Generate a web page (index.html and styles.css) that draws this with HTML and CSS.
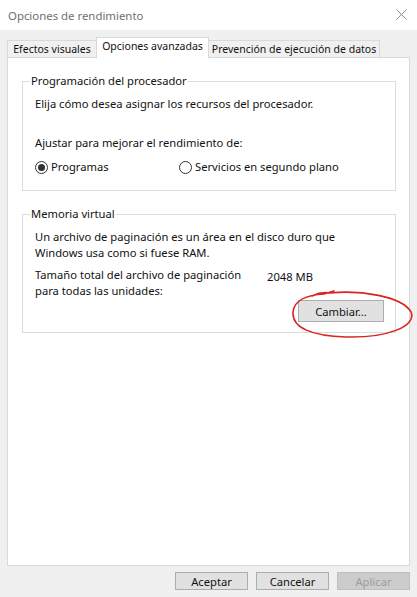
FILE: index.html
```html
<!DOCTYPE html>
<html lang="es">
<head>
<meta charset="utf-8">
<title>Opciones de rendimiento</title>
<link rel="stylesheet" href="styles.css">
</head>
<body>
<div class="window">
  <div class="titlebar">
    <span class="title">Opciones de rendimiento</span>
    <svg class="close" width="11" height="11" viewBox="0 0 11 11"><path d="M0.5 0.5 L10.5 10.5 M10.5 0.5 L0.5 10.5" stroke="#8a8a8a" stroke-width="1" fill="none"/></svg>
  </div>
  <div class="main">
    <div class="tabs">
      <div class="tab t1">Efectos visuales</div>
      <div class="tab active t2">Opciones avanzadas</div>
      <div class="tab t3">Prevención de ejecución de datos</div>
    </div>
    <div class="panel">
      <fieldset class="group g1">
        <legend>Programación del procesador</legend>
        <p class="line">Elija cómo desea asignar los recursos del procesador.</p>
        <p class="line l-ajustar">Ajustar para mejorar el rendimiento de:</p>
        <div class="radios">
          <div class="radio r1"><span class="circle checked"></span><span>Programas</span></div>
          <div class="radio r2"><span class="circle"></span><span>Servicios en segundo plano</span></div>
        </div>
      </fieldset>
      <fieldset class="group g2">
        <legend>Memoria virtual</legend>
        <p class="line">Un archivo de paginación es un área en el disco duro que<br>Windows usa como si fuese RAM.</p>
        <div class="size-row">
          <p class="line size-label">Tamaño total del archivo de paginación<br>para todas las unidades:</p>
          <span class="mb">2048 MB</span>
        </div>
        <div class="btn-row">
          <div class="btn-wrap">
            <div class="btn cambiar">Cambiar...</div>
            <svg class="scribble" width="128" height="52" viewBox="0 0 128 52">
              <path d="M22 6 C28 3 34 2 40 3 C70 0 112 6 121 22 C127 36 98 48 56 47 C22 46 2 38 3 22 C4 11 16 5 34 4 L44 1" fill="none" stroke="#d9251f" stroke-width="1.6" stroke-linecap="round" stroke-linejoin="round"/>
            </svg>
          </div>
        </div>
      </fieldset>
    </div>
    <div class="footer">
      <div class="btn">Aceptar</div>
      <div class="btn">Cancelar</div>
      <div class="btn disabled">Aplicar</div>
    </div>
  </div>
</div>
</body>
</html>
```
FILE: styles.css
```css
html, body {
  margin: 0;
  padding: 0;
}
body {
  width: 417px;
  height: 597px;
  overflow: hidden;
  background: #f0f0f0;
  font-family: "Noto Sans", "DejaVu Sans", sans-serif;
  font-size: 11.2px;
  color: #111;
}
.window {
  display: flex;
  flex-direction: column;
  height: 597px;
}
.titlebar {
  height: 30px;
  background: #fff;
  display: flex;
  align-items: center;
  justify-content: space-between;
  padding: 0 10px 0 8px;
}
.title {
  color: #6f6f6f;
  font-size: 11.4px;
}
.close {
  margin-top: -1px;
}
.main {
  flex: 1;
  display: flex;
  flex-direction: column;
  padding-top: 7px;
}
.tabs {
  display: flex;
  align-items: flex-end;
  height: 20px;
  margin-left: 7px;
}
.tab {
  box-sizing: border-box;
  height: 17px;
  border: 1px solid #d9d9d9;
  border-bottom: none;
  background: #f0f0f0;
  display: flex;
  align-items: center;
  justify-content: center;
  line-height: 15px;
  white-space: nowrap;
  font-size: 10.5px;
}
.t1 { width: 89px; border-right: none; }
.t2 { width: 113px; }
.t3 { width: 171px; border-left: none; }
.tab.active {
  height: 21px;
  margin-bottom: -1px;
  background: #fff;
  position: relative;
  z-index: 1;
  padding-bottom: 3px;
}
.panel {
  box-sizing: border-box;
  height: 509px;
  margin: 0 7px;
  background: #fff;
  border: 1px solid #d9d9d9;
}
.group {
  margin: 15px 13px 0 14px;
  padding: 7px 11px 0 12px;
  border: 1px solid #dcdcdc;
  min-width: 0;
}
.group legend {
  margin-left: -5px;
  padding: 0 1px;
  line-height: 16px;
  color: #111;
}
.line {
  margin: 0;
  line-height: 16px;
}
.g1 { padding-bottom: 15px; }
.l-ajustar { margin-top: 23px; }
.radios {
  display: flex;
  margin-top: 8px;
  height: 16px;
}
.radio {
  display: flex;
  align-items: center;
  gap: 3px;
  line-height: 16px;
}
.r1 { width: 144px; }
.circle {
  box-sizing: border-box;
  width: 13px;
  height: 13px;
  border: 1px solid #333;
  border-radius: 50%;
  display: flex;
  align-items: center;
  justify-content: center;
}
.circle.checked::after {
  content: "";
  width: 7px;
  height: 7px;
  border-radius: 50%;
  background: #333;
}
.g2 { padding-bottom: 10px; }
.size-row {
  display: flex;
  margin-top: 6px;
}
.size-label {
  width: 232px;
}
.mb {
  margin-top: 2px;
  line-height: 16px;
}
.btn-row {
  display: flex;
  justify-content: flex-end;
  margin-top: 1px;
}
.btn-wrap {
  position: relative;
}
.btn {
  box-sizing: border-box;
  background: #e1e1e1;
  border: 1px solid #adadad;
  display: flex;
  align-items: center;
  justify-content: center;
  color: #111;
}
.cambiar {
  width: 86px;
  height: 22px;
}
.scribble {
  position: absolute;
  left: -8px;
  top: -10px;
  pointer-events: none;
}
.footer {
  display: flex;
  justify-content: flex-end;
  gap: 8px;
  padding: 6px 7px 0 0;
}
.footer .btn {
  width: 73px;
  height: 18px;
}
.footer .btn.disabled {
  background: #cccccc;
  border-color: #bfbfbf;
  color: #9d9d9d;
}
```
